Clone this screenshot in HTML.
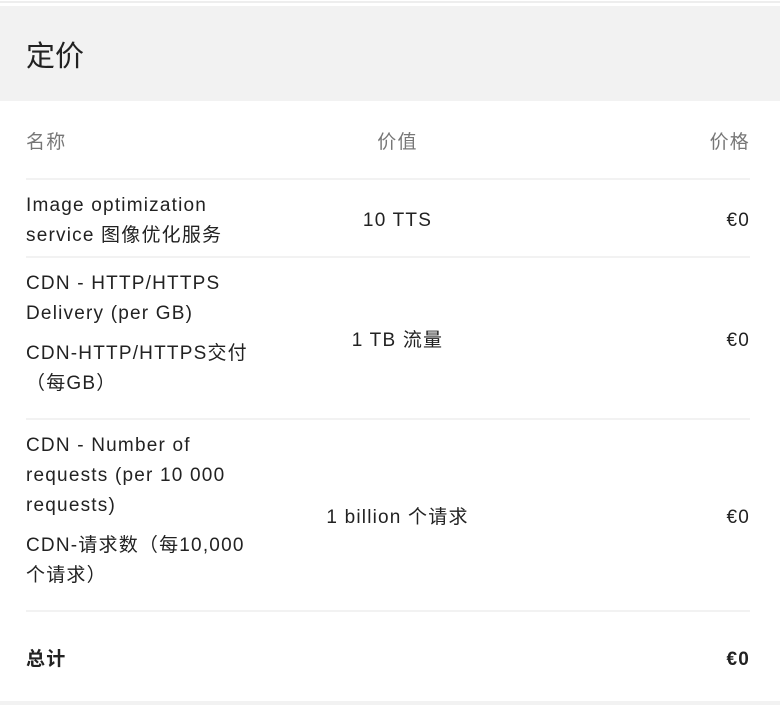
<!DOCTYPE html>
<html><head><meta charset="utf-8"><style>
body{margin:0;width:780px;height:705px;background:#fff;font-family:"Liberation Sans","Noto Sans CJK SC",sans-serif;color:#222;position:relative;overflow:hidden}
.a{position:absolute}
.hdr{left:0;top:6px;width:780px;height:95px;background:#f2f2f2}
.line{left:26px;width:724px;height:2px;background:#f2f2f2}
.t{font-size:19px;line-height:30px;letter-spacing:1.2px;white-space:nowrap}
.n{left:26px}
.v{left:250px;width:295px;text-align:center}
.p{right:30px;text-align:right}
.g{color:#777}
</style></head><body>
<div class="a" style="left:0;top:1px;width:780px;height:2px;background:#eee"></div>
<div class="a hdr"></div>
<div class="a" style="left:26px;top:37px;font-size:29px;line-height:40px;color:#222">定价</div>
<div class="a t n g" style="top:128px">名称</div>
<div class="a t v g" style="top:128px">价值</div>
<div class="a t p g" style="top:128px">价格</div>
<div class="a line" style="top:178px"></div>
<div class="a t n" style="top:191px">Image optimization<br>service 图像优化服务</div>
<div class="a t v" style="top:206px">10 TTS</div>
<div class="a t p" style="top:206px">€0</div>
<div class="a line" style="top:256px"></div>
<div class="a t n" style="top:269px">CDN - HTTP/HTTPS<br>Delivery (per GB)<div style="margin-top:10px">CDN-HTTP/HTTPS交付<br>（每GB）</div></div>
<div class="a t v" style="top:326px">1 TB 流量</div>
<div class="a t p" style="top:326px">€0</div>
<div class="a line" style="top:418px"></div>
<div class="a t n" style="top:431px">CDN - Number of<br>requests (per 10 000<br>requests)<div style="margin-top:10px">CDN-请求数（每10,000<br>个请求）</div></div>
<div class="a t v" style="top:503px">1 billion 个请求</div>
<div class="a t p" style="top:503px">€0</div>
<div class="a line" style="top:610px"></div>
<div class="a t n" style="top:645px;font-weight:bold">总计</div>
<div class="a t p" style="top:645px;font-weight:bold">€0</div>
<div class="a" style="left:0;top:701px;width:780px;height:4px;background:#f2f2f2"></div>
</body></html>
